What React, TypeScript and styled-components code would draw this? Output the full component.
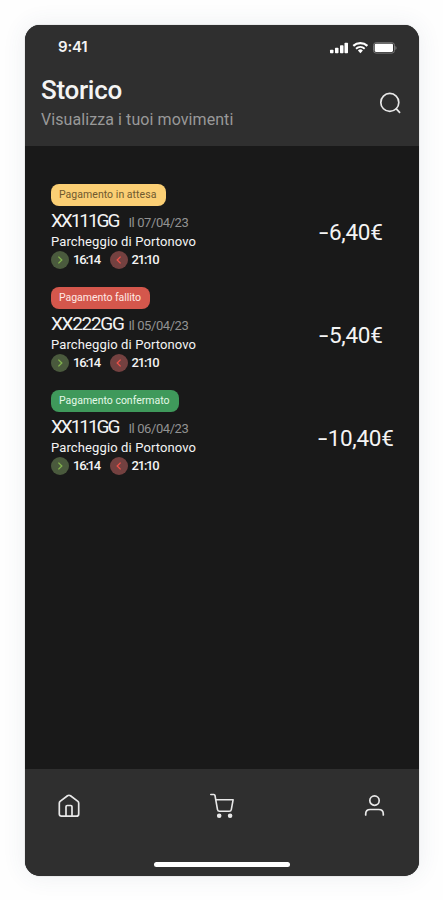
import React from "react";
import styled, { createGlobalStyle } from "styled-components";

const GlobalStyle = createGlobalStyle`
  * { box-sizing: border-box; }
  body { margin: 0; background: #fefefe; }
`;

const Page = styled.div`
  width: 443px;
  height: 900px;
  padding: 25px 0 0 25px;
  overflow: hidden;
`;

const Phone = styled.div`
  display: flex;
  flex-direction: column;
  width: 393.5px;
  height: 851px;
  border-radius: 15px;
  overflow: hidden;
  background: #191919;
  box-shadow: 0 0 1px #555a, 0 0 24px rgba(60, 80, 110, 0.09);
  font-family: Roboto, sans-serif;
  color: #f4f4f4;
`;

const Header = styled.header`
  height: 121px;
  background: #2f2f2f;
`;

const StatusBar = styled.div`
  display: flex;
  justify-content: space-between;
  align-items: center;
  height: 44px;
  padding: 0 21.5px 0 33px;
`;

const Clock = styled.span`
  font: 600 15px/20px Inter, sans-serif;
  letter-spacing: -0.2px;
`;

const TitleRow = styled.div`
  display: flex;
  justify-content: space-between;
  padding: 5px 17px 0 16px;
`;

const Title = styled.h1`
  margin: 0;
  font-size: 26px;
  font-weight: 500;
  line-height: 32px;
  letter-spacing: -0.3px;
`;

const Subtitle = styled.p`
  margin: 0;
  font-size: 16px;
  line-height: 27px;
  letter-spacing: 0.08px;
  color: #999;
`;

const IconButton = styled.button`
  display: flex;
  padding: 0;
  border: 0;
  background: none;
  color: #e8e8e8;
`;

const SearchButton = styled(IconButton)`
  align-self: flex-start;
  margin-top: 17px;
`;

const List = styled.main`
  display: flex;
  flex: 1;
  flex-direction: column;
  gap: 16px;
  padding: 37.5px 25px 0 26px;
`;

const Movement = styled.article`
  display: flex;
  height: 87px;
`;

const Details = styled.div`
  width: 268px;
`;

type Status = "pending" | "failed" | "confirmed";

const tagLook: Record<Status, { bg: string; fg: string; width: number; spacing: number }> = {
  pending: { bg: "#fbcf74", fg: "#70592e", width: 115, spacing: 0.04 },
  failed: { bg: "#d4574c", fg: "#ffe9e4", width: 99, spacing: -0.04 },
  confirmed: { bg: "#3f995b", fg: "#e4f8e7", width: 127.5, spacing: 0 },
};

const Tag = styled.div<{ $status: Status }>`
  width: ${(p) => tagLook[p.$status].width}px;
  height: 22px;
  padding-left: 8px;
  border-radius: 8px;
  background: ${(p) => tagLook[p.$status].bg};
  color: ${(p) => tagLook[p.$status].fg};
  font-size: 10.5px;
  line-height: 22px;
  letter-spacing: ${(p) => tagLook[p.$status].spacing}px;
  white-space: nowrap;
`;

const PlateRow = styled.div`
  display: flex;
  align-items: baseline;
  height: 27.5px;
  line-height: 29px;
  white-space: nowrap;
`;

const Plate = styled.span<{ $tight: boolean }>`
  width: 77.5px;
  font-size: 19px;
  letter-spacing: ${(p) => (p.$tight ? -2.05 : -1.3)}px;
`;

const DateLabel = styled.span`
  font-size: 13px;
  letter-spacing: -0.42px;
  color: #929292;
`;

const Place = styled.div`
  height: 17px;
  font-size: 13px;
  line-height: 17px;
  letter-spacing: 0.12px;
  white-space: nowrap;
`;

const Times = styled.div`
  display: flex;
  align-items: center;
  height: 20px;
`;

const Direction = styled.span<{ $exit?: boolean }>`
  display: flex;
  align-items: center;
  justify-content: center;
  width: 18px;
  height: 18px;
  margin-right: 4px;
  border-radius: 50%;
  background: ${(p) => (p.$exit ? "#744140" : "#4a5a3d")};
  color: ${(p) => (p.$exit ? "#ee5249" : "#83b44e")};
`;

const Time = styled.span`
  width: 36.5px;
  font-size: 13px;
  font-weight: 500;
  line-height: 20px;
  letter-spacing: -1.2px;
`;

const Amount = styled.div`
  align-self: center;
  padding-top: 10px;
  font-size: 22.5px;
  line-height: 26px;
  letter-spacing: -0.3px;
  white-space: nowrap;
`;

const Sign = styled.span`
  display: inline-block;
  width: 10px;
  transform: scaleX(1.5);
  transform-origin: left;
`;

const Footer = styled.footer`
  display: flex;
  flex-direction: column;
  justify-content: space-between;
  align-items: center;
  height: 107px;
  padding-bottom: 9px;
  background: #2f2f2f;
`;

const Nav = styled.nav`
  display: flex;
  justify-content: space-between;
  width: 100%;
  padding: 24px 32px 0;
`;

const HomeIndicator = styled.div`
  width: 136px;
  height: 5px;
  border-radius: 3px;
  background: #fff;
`;

const StatusIcons = () => (
  <svg width="70" height="16" viewBox="0 0 70 16" fill="#fff">
    <rect x="3" y="10.7" width="3.5" height="3.5" rx="0.7" />
    <rect x="8" y="8.7" width="3.5" height="5.5" rx="0.7" />
    <rect x="13" y="6.2" width="3.5" height="8" rx="0.7" />
    <rect x="17.5" y="3.7" width="3.5" height="10.5" rx="0.7" />
    <path d="M26.3 6.900a10.600 10.600 0 0 1 14.100 0" fill="none" stroke="#fff" strokeWidth="2.200" />
    <path d="M29 9.700a6.600 6.600 0 0 1 8.700 0" fill="none" stroke="#fff" strokeWidth="1.900" />
    <path d="M30.900 11.500a3.700 3.700 0 0 1 5 0l-2.500 2.700z" />
    <rect x="46.500" y="3.700" width="21" height="10.400" rx="2.600" fill="none" stroke="#777" />
    <rect x="47.700" y="4.700" width="18.300" height="8.200" rx="1.300" />
    <path d="M68.300 7q1.300.6 1.300 2t-1.300 2z" fill="#777" />
  </svg>
);

const SearchIcon = () => (
  <svg width="24" height="24" viewBox="0 0 24 24" fill="none" stroke="currentColor" strokeWidth="1.7" strokeLinecap="round">
    <circle cx="11.8" cy="11.4" r="9" />
    <path d="m18.3 17.9 3.3 3.5" />
  </svg>
);

const HomeIcon = () => (
  <svg width="24" height="26" viewBox="0 0 24 26" fill="none" stroke="currentColor" strokeWidth="1.7" strokeLinejoin="round">
    <path d="M2.300 10.200q0-1.100.8-1.800l7.400-5.600q1.500-1.100 3 0l7.400 5.600q.8.700.8 1.800v10.700q0 2.300-2.300 2.300H4.600q-2.300 0-2.300-2.300z" />
    <path d="M9 23v-9.300q0-1.200 1.200-1.200h3.600q1.200 0 1.200 1.200V23" />
  </svg>
);

const CartIcon = () => (
  <svg width="28" height="26" viewBox="0 0 28 26" fill="none" stroke="currentColor" strokeWidth="1.6" strokeLinecap="round" strokeLinejoin="round">
    <path d="M2.800 1.500h3q1 0 1.200 1l2.500 14.100q.3 1.600 2 1.600h9.800q1.700 0 2-1.600l1.800-9.800H7.700" />
    <circle cx="11.200" cy="22.700" r="1.500" fill="currentColor" />
    <circle cx="22.100" cy="22.700" r="1.500" fill="currentColor" />
  </svg>
);

const UserIcon = () => (
  <svg width="24" height="26" viewBox="0 0 24 26" fill="none" stroke="currentColor" strokeWidth="1.7" strokeLinecap="round">
    <circle cx="11.500" cy="7.600" r="4.700" />
    <path d="M2.700 22v-1q0-4.500 4.500-4.500h8.600q4.500 0 4.500 4.500v1" />
  </svg>
);

const Chevron = ({ left = false }: { left?: boolean }) => (
  <svg width="10" height="10" viewBox="0 0 10 10" fill="none" stroke="currentColor" strokeWidth="1.3">
    <path d={left ? "m6.600 1.600-3.400 3.400 3.400 3.400" : "m3.400 1.600 3.400 3.400-3.400 3.400"} />
  </svg>
);

const movements: { status: Status; label: string; plate: string; date: string; amount: string }[] = [
  { status: "pending", label: "Pagamento in attesa", plate: "XX111GG", date: "Il 07/04/23", amount: "6,40€" },
  { status: "failed", label: "Pagamento fallito", plate: "XX222GG", date: "Il 05/04/23", amount: "5,40€" },
  { status: "confirmed", label: "Pagamento confermato", plate: "XX111GG", date: "Il 06/04/23", amount: "10,40€" },
];

export default function App() {
  return (
    <Page>
      <GlobalStyle />
      <Phone>
        <Header>
          <StatusBar>
            <Clock>9:41</Clock>
            <StatusIcons />
          </StatusBar>
          <TitleRow>
            <div>
              <Title>Storico</Title>
              <Subtitle>Visualizza i tuoi movimenti</Subtitle>
            </div>
            <SearchButton aria-label="Cerca"><SearchIcon /></SearchButton>
          </TitleRow>
        </Header>
        <List>
          {movements.map((m) => (
            <Movement key={m.date}>
              <Details>
                <Tag $status={m.status}>{m.label}</Tag>
                <PlateRow>
                  <Plate $tight={m.plate.includes("111")}>{m.plate}</Plate>
                  <DateLabel>{m.date}</DateLabel>
                </PlateRow>
                <Place>Parcheggio di Portonovo</Place>
                <Times>
                  <Direction><Chevron /></Direction>
                  <Time>16:14</Time>
                  <Direction $exit><Chevron left /></Direction>
                  <Time>21:10</Time>
                </Times>
              </Details>
              <Amount><Sign>-</Sign>{m.amount}</Amount>
            </Movement>
          ))}
        </List>
        <Footer>
          <Nav>
            <IconButton aria-label="Home"><HomeIcon /></IconButton>
            <IconButton aria-label="Carrello"><CartIcon /></IconButton>
            <IconButton aria-label="Profilo"><UserIcon /></IconButton>
          </Nav>
          <HomeIndicator />
        </Footer>
      </Phone>
    </Page>
  );
}
